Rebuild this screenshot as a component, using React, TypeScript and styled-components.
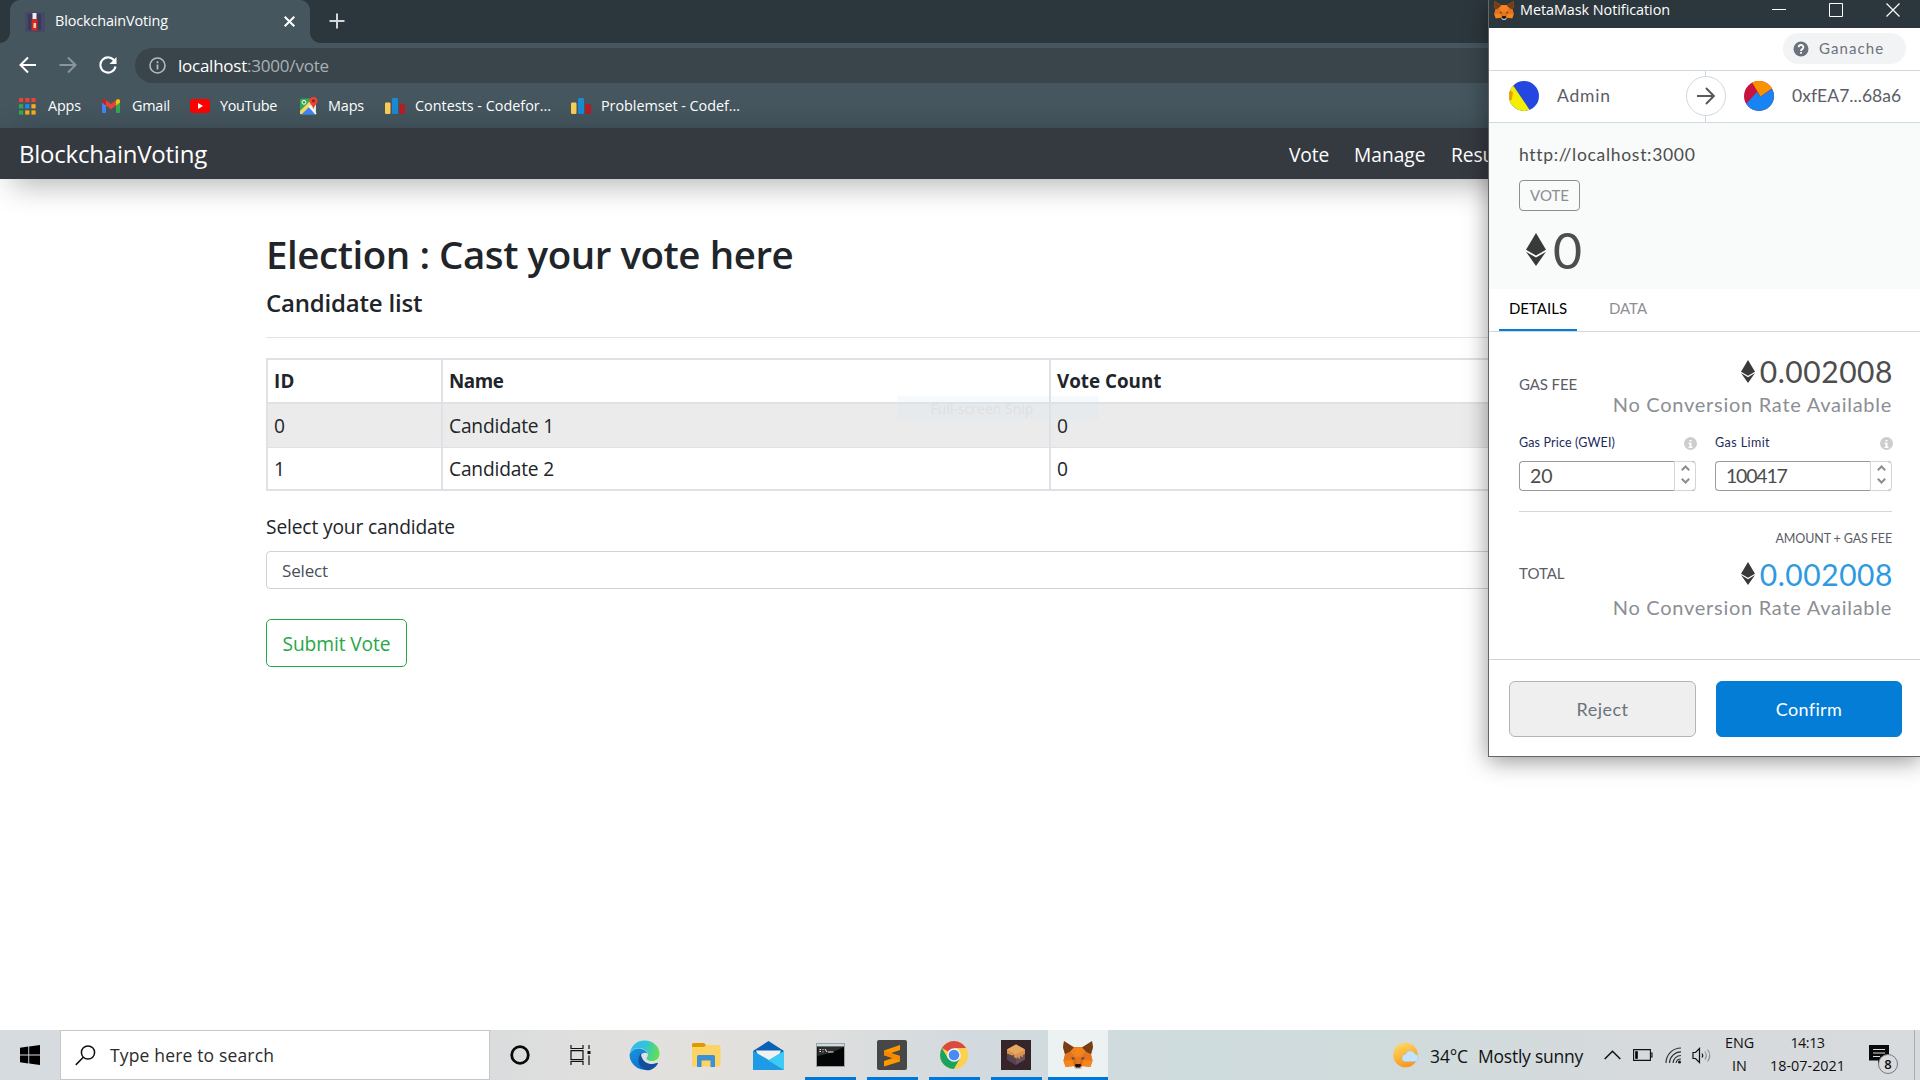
import React from "react";
import styled, { createGlobalStyle, css } from "styled-components";

const GlobalStyle = createGlobalStyle`
  *, *::before, *::after { box-sizing: border-box; }
  html, body { margin: 0; padding: 0; }
  body { background: #fff; overflow: hidden; }
  svg { display: block; flex: none; }
`;

const segoe = css`font-family: "Open Sans", "Noto Sans", sans-serif;`;
const euclid = css`font-family: Lato, "Open Sans", sans-serif;`;

const Desktop = styled.div`
  position: relative;
  display: flex;
  flex-direction: column;
  width: 1920px;
  height: 1080px;
  overflow: hidden;
  ${segoe}
  line-height: 1;
  color: #212529;
`;

/* Text with its own tracking */
const Text = styled.span<{ $ls?: number }>`
  white-space: pre;
  letter-spacing: ${(p) => p.$ls ?? 0}px;
`;

/* ---------- Browser chrome ---------- */
const TabStrip = styled.div`
  display: flex;
  height: 43px;
  flex: none;
  padding-left: 10px;
  background: #2c373d;
`;
const Tab = styled.div`
  position: relative;
  display: flex;
  align-items: center;
  width: 300px;
  height: 43px;
  padding: 0 15px;
  border-radius: 10px 10px 0 0;
  background: #45565f;
  color: #fff;
  font-size: 14.4px;
  &::before, &::after {
    content: "";
    position: absolute;
    bottom: 0;
    width: 10px;
    height: 10px;
  }
  &::before { left: -10px; background: radial-gradient(circle at 0 0, transparent 9.5px, #45565f 10px); }
  &::after { right: -10px; background: radial-gradient(circle at 100% 0, transparent 9.5px, #45565f 10px); }
`;
const TabTitle = styled(Text)`
  margin-left: 10px;
  flex: 1;
`;
const NewTab = styled.div`
  display: flex;
  align-items: center;
  margin-left: 19px;
  padding-bottom: 1px;
`;
const Toolbar = styled.div`
  display: flex;
  align-items: center;
  flex: none;
  height: 45px;
  padding: 0 0 1px 19px;
  background: #45565f;
`;
const ToolButton = styled.div`
  width: 40px;
`;
const AddressBar = styled.div`
  display: flex;
  align-items: center;
  flex: 1;
  height: 35px;
  margin-left: -4px;
  padding-left: 14px;
  border-radius: 18px 0 0 18px;
  background: #39454b;
  font-size: 17px;
  color: #fff;
`;
const Host = styled(Text)` margin-left: 12px; `;
const Path = styled(Text)` color: #a9b1b5; `;
const BookmarkBar = styled.div`
  display: flex;
  align-items: center;
  flex: none;
  height: 40px;
  padding: 0 0 4px 19px;
  background: #45565f;
  color: #fff;
  font-size: 14.4px;
`;
const Bookmark = styled.div<{ $w: number; $gap: number }>`
  display: flex;
  align-items: center;
  gap: ${(p) => p.$gap}px;
  width: ${(p) => p.$w}px;
`;

/* ---------- Page ---------- */
const NavBar = styled.div`
  position: relative;
  display: flex;
  align-items: center;
  justify-content: space-between;
  flex: none;
  height: 51px;
  padding: 1px 0 0 19px;
  background: #353940;
  color: #fff;
  box-shadow: 12px 6px 30px rgba(0, 0, 0, 0.3);
`;
const Brand = styled(Text)` font-size: 24px; `;
const NavLinks = styled.div`
  display: flex;
  width: 631px;
  padding-top: 1px;
  font-size: 19.2px;
`;
const NavLink = styled(Text)<{ $w: number }>` width: ${(p) => p.$w}px; `;
const Main = styled.main`
  display: flex;
  flex-direction: column;
  align-items: flex-start;
  flex: 1;
  padding: 56px 0 0 266px;
  background: #fff;
`;
const Title = styled.h1`
  margin: 0;
  font-size: 38.5px;
  font-weight: 600;
  line-height: 39px;
  letter-spacing: -0.45px;
  white-space: pre;
`;
const Subtitle = styled.h5`
  margin: 16px 0 0;
  font-size: 24px;
  font-weight: 600;
  line-height: 26px;
  letter-spacing: -0.2px;
`;
const Rule = styled.hr`
  width: 1388px;
  height: 1px;
  margin: 21px 0 20px;
  border: 0;
  background: #e3e4e5;
`;
const Table = styled.div`
  width: 1388px;
  border: 2px solid #dee2e6;
  font-size: 19.2px;
`;
const Row = styled.div<{ $h: number; $head?: boolean; $odd?: boolean; $line?: number }>`
  display: grid;
  grid-template-columns: 175px 608px 1fr;
  height: ${(p) => p.$h}px;
  border-bottom: ${(p) => p.$line ?? 0}px solid #dee2e6;
  background: ${(p) => (p.$odd ? "#ebebeb" : "#fff")};
  font-weight: ${(p) => (p.$head ? 700 : 400)};
  ${(p) => p.$head && "font-size: 18.8px;"}
`;
const Cell = styled.div`
  display: flex;
  align-items: center;
  padding: 0 0 0 6px;
  &:not(:last-child) { border-right: 2px solid #dee2e6; }
`;
const Label = styled.label`
  margin-top: 26px;
  font-size: 19.2px;
  line-height: 20px;
  letter-spacing: -0.14px;
`;
const SelectBox = styled.div`
  display: flex;
  align-items: center;
  width: 1388px;
  height: 38px;
  margin-top: 14px;
  padding: 0 0 0 15px;
  border: 1px solid #ced4da;
  border-radius: 4px;
  color: #495057;
  font-size: 17px;
`;
const SubmitButton = styled.div`
  display: flex;
  align-items: center;
  justify-content: center;
  width: 141px;
  height: 48px;
  margin-top: 30px;
  padding-top: 1px;
  border: 1px solid #28a745;
  border-radius: 5px;
  color: #28a745;
  font-size: 19.2px;
`;
const SnipHint = styled.div`
  position: absolute;
  left: 897px;
  top: 396px;
  display: flex;
  align-items: center;
  justify-content: center;
  width: 202px;
  height: 24px;
  padding: 2px 32px 0 0;
  background: rgba(215, 232, 240, 0.22);
  color: rgba(222, 214, 214, 0.6);
  font-size: 14px;
`;

/* ---------- Wallet popup ---------- */
const Popup = styled.div`
  position: absolute;
  left: 1488px;
  top: 0;
  display: flex;
  flex-direction: column;
  width: 433px;
  height: 757px;
  border-left: 1px solid #63676a;
  border-bottom: 1px solid #63676a;
  background: #fff;
  box-shadow: 0 4px 22px rgba(0, 0, 0, 0.42);
  ${euclid}
  color: #4d4d4d;
`;
const TitleBar = styled.div`
  display: flex;
  align-items: center;
  height: 28px;
  padding: 0 21px 8px 5px;
  background: #2c373d;
  color: #fff;
  ${segoe}
  font-size: 14.4px;
`;
const WindowTitle = styled(Text)` margin-left: 6px; flex: 1; `;
const WindowButtons = styled.div` display: flex; align-items: center; gap: 43px; `;
const NetworkRow = styled.div`
  display: flex;
  align-items: center;
  justify-content: flex-end;
  height: 43px;
  padding: 0 15px 1px 0;
  border-bottom: 1px solid #d2d8dd;
`;
const NetworkPill = styled.div`
  display: flex;
  align-items: center;
  width: 123px;
  height: 31px;
  padding-left: 10px;
  gap: 10px;
  border-radius: 16px;
  background: #f2f3f4;
  color: #6a737d;
  font-size: 15px;
`;
const Accounts = styled.div`
  display: flex;
  align-items: center;
  height: 52px;
  padding: 0 19px 1px 20px;
  border-bottom: 1px solid #d2d8dd;
  font-size: 17.5px;
  color: #5b5d67;
`;
const AccountName = styled(Text)<{ $w?: number }>`
  margin-left: 18px;
  width: ${(p) => (p.$w ? p.$w + "px" : "auto")};
`;
const ArrowColumn = styled.div`
  display: flex;
  align-items: center;
  justify-content: center;
  width: 40px;
  height: 51px;
  margin-right: 18px;
  background: linear-gradient(#d2d8dd, #d2d8dd) 19px 0 / 1px 100% no-repeat;
`;
const ArrowCircle = styled.div`
  display: flex;
  align-items: center;
  justify-content: center;
  width: 40px;
  height: 40px;
  border: 1px solid #d2d8dd;
  border-radius: 50%;
  background: #fff;
`;
const Summary = styled.div`
  display: flex;
  flex-direction: column;
  align-items: flex-start;
  height: 166px;
  padding: 23px 0 0 30px;
  background: #f9fafa;
  font-size: 17.5px;
`;
const ActionTag = styled.div`
  display: flex;
  align-items: center;
  justify-content: center;
  width: 61px;
  height: 31px;
  margin-top: 16px;
  border: 1px solid #8c8e94;
  border-radius: 4px;
  color: #8c8e94;
  font-size: 15px;
`;
const Value = styled.div`
  display: flex;
  align-items: center;
  height: 52px;
  margin: 13px 0 0 7px;
  gap: 7px;
  font-size: 50px;
`;
const Tabs = styled.div`
  display: flex;
  height: 43px;
  padding-left: 10px;
  border-bottom: 1px solid #d2d8dd;
  font-size: 15px;
`;
const PopupTab = styled.div<{ $active?: boolean; $w: number }>`
  display: flex;
  align-items: center;
  justify-content: center;
  width: ${(p) => p.$w}px;
  height: 42px;
  margin-right: 21px;
  padding-bottom: 1px;
  border-bottom: 2px solid ${(p) => (p.$active ? "#037dd6" : "transparent")};
  color: ${(p) => (p.$active ? "#000" : "#8c8e94")};
`;
const Fees = styled.div`
  display: flex;
  flex-direction: column;
  height: 327px;
  padding: 24px 28px 0 30px;
`;
const FeeRow = styled.div`
  display: flex;
  align-items: center;
  justify-content: space-between;
  height: 58px;
  flex: none;
  font-size: 15px;
  color: #5b5d67;
`;
const FeeLabel = styled(Text)<{ $lift?: number }>` padding-bottom: ${(p) => p.$lift ?? 0}px; `;
const FeeValues = styled.div`
  display: flex;
  flex-direction: column;
  align-items: flex-end;
  gap: 8px;
`;
const Amount = styled.div<{ $blue?: boolean }>`
  display: flex;
  align-items: center;
  gap: 5px;
  font-size: 30px;
  color: ${(p) => (p.$blue ? "#2f9ae0" : "#4d4d4d")};
`;
const Conversion = styled(Text)` font-size: 20px; color: #8c8e94; margin-right: 1px; `;
const GasInputs = styled.div` display: flex; gap: 18px; margin-top: 22px; `;
const GasField = styled.div` width: 178px; `;
const GasLabel = styled.div`
  display: flex;
  align-items: center;
  justify-content: space-between;
  height: 15px;
  font-size: 12.5px;
  color: #1b2b5c;
`;
const InfoDot = styled.div`
  display: flex;
  align-items: center;
  justify-content: center;
  width: 13px;
  height: 13px;
  border-radius: 50%;
  background: #cdcdcd;
`;
const NumberInput = styled.div`
  display: flex;
  justify-content: space-between;
  align-items: center;
  width: 177px;
  height: 30px;
  margin-top: 10px;
  padding-left: 10px;
  border: 1px solid #9b9b9b;
  border-right-color: #d5d5d5;
  border-radius: 4px;
  font-size: 19.5px;
  color: #4d4d4d;
`;
const Spinner = styled.div`
  display: flex;
  flex-direction: column;
  align-items: center;
  justify-content: space-between;
  width: 21px;
  height: 30px;
  padding: 3px 0 6px;
  border: 1px solid #d5d5d5;
  border-right: 0;
  border-radius: 0 4px 4px 0;
`;
const FeeDivider = styled.div` height: 1px; margin-top: 20px; flex: none; background: #d2d8dd; width: 373px; `;
const TotalCaption = styled.div`
  display: flex;
  justify-content: flex-end;
  margin: 21px 1px 13px 0;
  font-size: 12.5px;
  color: #5b5d67;
`;
const Footer = styled.div`
  display: flex;
  gap: 20px;
  flex: 1;
  padding: 21px 0 0 20px;
  border-top: 1px solid #d2d3d6;
`;
const FooterButton = styled.div<{ $primary?: boolean }>`
  display: flex;
  align-items: center;
  justify-content: center;
  width: ${(p) => (p.$primary ? 186 : 187)}px;
  height: 56px;
  padding-bottom: 1px;
  border: 1px solid ${(p) => (p.$primary ? "#037dd6" : "#b3b4b6")};
  border-radius: 6px;
  background: ${(p) => (p.$primary ? "#037dd6" : "#efefef")};
  color: ${(p) => (p.$primary ? "#fff" : "#6a737d")};
  font-size: 18px;
`;

/* ---------- Taskbar ---------- */
const Taskbar = styled.div`
  display: flex;
  flex: none;
  height: 50px;
  background: linear-gradient(90deg, #d6dbe0 0, #dadcdd 25%, #e3e1de 36%, #dfdfdd 42%, #d3dadf 50%, #cfdcdd 62%, #d0dbdc 72%, #d6dadd 85%, #d7dbde 100%);
  color: #111;
`;
const BarCell = styled.div<{ $w: number }>`
  display: flex;
  align-items: center;
  justify-content: center;
  flex: none;
  width: ${(p) => p.$w}px;
`;
const SearchBox = styled.div`
  display: flex;
  align-items: center;
  width: 430px;
  padding-left: 14px;
  border: 1px solid #c5c7c9;
  background: #fff;
  font-size: 17.5px;
  color: #2b2b2b;
`;
const SearchText = styled(Text)` margin-left: 14px; padding-top: 1px; `;
const Pinned = styled.div` display: flex; margin-left: 4px; gap: 2px; `;
const TaskApp = styled.div<{ $open?: boolean; $active?: boolean }>`
  display: flex;
  align-items: center;
  justify-content: center;
  width: 60px;
  background: ${(p) =>
    [
      p.$open ? `linear-gradient(#0078d7, #0078d7) center bottom / ${p.$active ? 60 : 51}px 3px no-repeat` : "",
      p.$active ? "linear-gradient(#ecf1f2, #ecf1f2)" : "",
    ].filter(Boolean).join(", ") || "none"};
`;
const Tray = styled.div`
  display: flex;
  align-items: center;
  width: 527px;
  margin-left: auto;
  font-size: 17.5px;
`;
const TrayItem = styled.div<{ $w: number; $drop?: number }>`
  flex: none;
  width: ${(p) => p.$w}px;
  padding-top: ${(p) => p.$drop ?? 0}px;
`;
const TrayStack = styled.div<{ $w: number }>`
  display: flex;
  flex-direction: column;
  align-items: center;
  gap: 9px;
  width: ${(p) => p.$w}px;
  padding-bottom: 1px;
  font-size: 14.4px;
`;
const Notifications = styled.div`
  position: relative;
  width: 58px;
  height: 50px;
  padding: 15px 0 0 13px;
`;
const Badge = styled.div`
  position: absolute;
  left: 22px;
  top: 24px;
  display: flex;
  align-items: center;
  justify-content: center;
  width: 20px;
  height: 20px;
  border: 1px solid #76797b;
  border-radius: 50%;
  background: #d8dbdd;
  font-size: 13px;
  font-weight: 600;
`;
const ShowDesktop = styled.div` width: 6px; height: 50px; border-left: 1px solid #a9adb0; `;

/* ---------- Icons ---------- */
const Fox = ({ size }: { size: number }) => (
  <svg width={size} height={size * 0.95} viewBox="0 0 30 28" preserveAspectRatio="none">
    <path d="M1 .5L10.500 6h9L29 .5l.8 6.500L28 13l1.500 6.500-2 6-8-1-1.500 2h-6l-1.500-2-8 1-2-6L2 13 .2 7z" fill="#e8761c" />
    <path d="M1 0l10 6.500-3.500 4L2 13 0 6zM29 0L19 6.500l3.500 4L28 13l2-7z" fill="#763d16" />
    <path d="M11 6.500h8l-1.500 9h-5z" fill="#f6851b" />
    <path d="M11 6.500l1.500 9L7 10.500zM19 6.500l-1.500 9 5.500-5z" fill="#f08324" />
    <path d="M2 13l5.500-2.500 4.500 6-7 2-4.500 1zM28 13l-5.500-2.500-4.500 6 7 2 4.500 1z" fill="#e4751f" />
    <path d="M.5 19.500l8.500-.5 2 5.500-8 1zM29.500 19.500l-8.500-.5-2 5.500 8 1z" fill="#f6851b" />
    <path d="M8.500 15.500l3.500 1.500-.5 1.500-2.500-.5zM21.500 15.500L18 17l.5 1.500 2.500-.5z" fill="#5c4a4a" />
    <path d="M12 17l1 6h4l1-6 1 7-1.500 1h-5L11 24z" fill="#cd6116" />
    <path d="M12 23.500l1-1h4l1 1v2h-6z" fill="#161616" />
    <path d="M11 25h8l-1.500 3h-5z" fill="#c8bbb0" />
    <path d="M12.200 23.500l1-1h3.600l1 1-.8 2.500h-4z" fill="#161616" />
  </svg>
);
const Eth = ({ w, h }: { w: number; h: number }) => (
  <svg width={w} height={h} viewBox="0 0 20 33" preserveAspectRatio="none">
    <path d="M10 0l10 16.700-10 5.800L0 16.700z" fill="#393939" />
    <path d="M10 24.600l10-5.900L10 33 0 18.700z" fill="#393939" />
  </svg>
);
const Bars = () => (
  <svg width="20" height="16" viewBox="0 0 20 16">
    <rect x="0" y="4.500" width="5.500" height="11.500" rx="1.200" fill="#f9cf56" />
    <rect x="7" y="0" width="6" height="16" rx="1.200" fill="#1c8ad1" />
    <rect x="14.500" y="6" width="5.500" height="10" rx="1.200" fill="#b81d24" />
  </svg>
);
const AppsIcon = () => {
  const colors = ["#ea4335", "#ea4335", "#ea4335", "#34a853", "#1a8cff", "#fbaf17", "#34a853", "#fbaf17", "#fbaf17"];
  return (
    <svg width="17" height="17" viewBox="0 0 17 17">
      {colors.map((c, i) => (
        <rect key={i} x={(i % 3) * 6.2} y={Math.floor(i / 3) * 6.2} width="4.200" height="4.200" fill={c} />
      ))}
    </svg>
  );
};
const Gmail = () => (
  <svg width="18" height="14" viewBox="0 0 18 14">
    <path d="M0 2v11q0 1 1 1h3V5z" fill="#4285f4" />
    <path d="M18 2v11q0 1-1 1h-3V5z" fill="#34a853" />
    <path d="M4 1.200l5 3.800 5-3.800V6.500L9 10.300 4 6.500z" fill="#ea4335" />
    <path d="M0 2Q0 0 2 0l2 1.200v5.300L0 3.500z" fill="#c5221f" />
    <path d="M18 2q0-2-2-2l-2 1.200v5.300l4-3z" fill="#fbbc04" />
  </svg>
);
const YouTube = () => (
  <svg width="20" height="14" viewBox="0 0 20 14">
    <rect width="20" height="14" rx="3.200" fill="#f00" />
    <path d="M8 4l5 3-5 3z" fill="#fff" />
  </svg>
);
const MapsIcon = () => (
  <svg width="18" height="18" viewBox="0 0 18 18">
    <rect y="1.500" width="16" height="16" rx="1.500" fill="#34a853" />
    <path d="M8 9l8 8.500H0z" fill="#4285f4" />
    <path d="M8.500 9.500L16 2.500V17z" fill="#e8eaed" />
    <path d="M0 14L12.500 1.500 15 4 2 17H0z" fill="#fdd663" />
    <path d="M9 9l7 8" stroke="#fff" strokeWidth="1.800" />
    <circle cx="4" cy="5.300" r="1.900" fill="none" stroke="#fff" strokeWidth="1" />
    <path d="M13.500 0a4 4 0 014 4c0 2.600-3 4.200-4 8-1-3.800-4-5.400-4-8a4 4 0 014-4z" fill="#ea4335" />
    <circle cx="13.500" cy="4" r="1.400" fill="#8a1c14" />
  </svg>
);
const Favicon = () => (
  <svg width="20" height="20" viewBox="0 0 20 20">
    <rect width="20" height="20" fill="#454866" />
    <rect x="3" y="2" width="13" height="16" fill="#39395a" />
    <rect x="7.500" y="1" width="4" height="6.500" fill="#eceef2" />
    <rect x="6.500" y="7" width="6" height="11.500" rx="1" fill="#d5291b" />
    <rect x="8.500" y="11" width="2.500" height="5" fill="#f6c6c0" />
  </svg>
);
const BackArrow = ({ color, flip }: { color: string; flip?: boolean }) => (
  <svg width="18" height="18" viewBox="0 0 18 18" fill="none" stroke={color} strokeWidth="2">
    <path d={flip ? "M0.500 9h15.500M9 1.500L16.500 9 9 16.500" : "M17 9H2M9 1.500L1.500 9 9 16.500"} />
  </svg>
);
const Caret = ({ up }: { up?: boolean }) => (
  <svg width="9" height="6" viewBox="0 0 9 6" fill="none" stroke="#8d8d8d" strokeWidth="2">
    <path d={up ? "M0.800 5.200L4.500 1.500l3.700 3.700" : "M0.800 0.800l3.700 3.700L8.200 0.800"} />
  </svg>
);
const InfoIcon = () => (
  <InfoDot>
    <svg width="5" height="8" viewBox="0 0 5 8" fill="#fff">
      <path d="M1.500 0h2v1.600h-2zM.5 2.700h3v4h1V8h-4V6.700h1V4h-1z" />
    </svg>
  </InfoDot>
);

const GasInput = ({ label, labelLs, value, valueLs }: { label: string; labelLs: number; value: string; valueLs: number }) => (
  <GasField>
    <GasLabel><Text $ls={labelLs}>{label}</Text><InfoIcon /></GasLabel>
    <NumberInput>
      <Text $ls={valueLs}>{value}</Text>
      <Spinner><Caret up /><Caret /></Spinner>
    </NumberInput>
  </GasField>
);

export default function App() {
  return (
    <Desktop>
      <GlobalStyle />
      <TabStrip>
        <Tab>
          <Favicon />
          <TabTitle $ls={-0.12}>BlockchainVoting</TabTitle>
          <svg width="11" height="11" viewBox="0 0 11 11" stroke="#fff" strokeWidth="2"><path d="M.7.7l9.600 9.600M10.300.7L.7 10.300" /></svg>
        </Tab>
        <NewTab>
          <svg width="16" height="16" viewBox="0 0 16 16" stroke="#d5d8da" strokeWidth="2"><path d="M8 .5v15M.5 8h15" /></svg>
        </NewTab>
      </TabStrip>
      <Toolbar>
        <ToolButton><BackArrow color="#fff" /></ToolButton>
        <ToolButton><BackArrow color="#8b969c" flip /></ToolButton>
        <ToolButton>
          <svg width="18" height="18" viewBox="0 0 18 18">
            <path d="M15.800 5.500A7.600 7.600 0 1016.500 10.500" fill="none" stroke="#fff" strokeWidth="2.100" />
            <path d="M17.500 1v7h-7z" fill="#fff" />
          </svg>
        </ToolButton>
        <AddressBar>
          <svg width="17" height="17" viewBox="0 0 17 17">
            <circle cx="8.500" cy="8.500" r="7.500" fill="none" stroke="#b4babd" strokeWidth="1.600" />
            <path d="M8.500 7.500v5M8.500 4.200v2" stroke="#b4babd" strokeWidth="1.800" />
          </svg>
          <Host $ls={-0.25}>localhost</Host><Path $ls={-0.19}>:3000/vote</Path>
        </AddressBar>
      </Toolbar>
      <BookmarkBar>
        <Bookmark $w={83} $gap={12}><AppsIcon /><Text $ls={-0.14}>Apps</Text></Bookmark>
        <Bookmark $w={88} $gap={12}><Gmail /><Text $ls={-0.21}>Gmail</Text></Bookmark>
        <Bookmark $w={110} $gap={10}><YouTube /><Text $ls={-0.31}>YouTube</Text></Bookmark>
        <Bookmark $w={85} $gap={10}><MapsIcon /><Text $ls={-0.15}>Maps</Text></Bookmark>
        <Bookmark $w={186} $gap={10}><Bars /><Text>Contests - Codefor...</Text></Bookmark>
        <Bookmark $w={180} $gap={10}><Bars /><Text $ls={-0.05}>Problemset - Codef...</Text></Bookmark>
      </BookmarkBar>
      <NavBar>
        <Brand $ls={-0.22}>BlockchainVoting</Brand>
        <NavLinks>
          <NavLink $w={65} $ls={-0.1}>Vote</NavLink>
          <NavLink $w={97}>Manage</NavLink>
          <NavLink $w={90} $ls={-0.1}>Results</NavLink>
        </NavLinks>
      </NavBar>
      <Main>
        <Title>Election : Cast your vote here</Title>
        <Subtitle>Candidate list</Subtitle>
        <Rule />
        <Table>
          <Row $h={44} $head $line={2}>
            <Cell><Text $ls={0.3}>ID</Text></Cell>
            <Cell><Text $ls={-0.4}>Name</Text></Cell>
            <Cell><Text $ls={0}>Vote Count</Text></Cell>
          </Row>
          <Row $h={44} $odd $line={1}>
            <Cell>0</Cell><Cell><Text $ls={-0.19}>Candidate 1</Text></Cell><Cell>0</Cell>
          </Row>
          <Row $h={41}>
            <Cell>1</Cell><Cell><Text $ls={-0.19}>Candidate 2</Text></Cell><Cell>0</Cell>
          </Row>
        </Table>
        <Label>Select your candidate</Label>
        <SelectBox><Text $ls={-0.15}>Select</Text></SelectBox>
        <SubmitButton><Text $ls={-0.1}>Submit Vote</Text></SubmitButton>
      </Main>

      <Taskbar>
        <BarCell $w={60}>
          <svg width="20" height="20" viewBox="0 0 20 20"><path d="M0 2.800l8.300-1.200v8H0zM9.200 1.500L20 0v9.600H9.200zM0 10.500h8.300v8L0 17.300zM9.200 10.500H20V20L9.200 18.500z" /></svg>
        </BarCell>
        <SearchBox>
          <svg width="21" height="21" viewBox="0 0 21 21" fill="none" stroke="#111" strokeWidth="1.500"><circle cx="13" cy="7.500" r="6.600" /><path d="M8.300 12.300L.8 19.900" /></svg>
          <SearchText $ls={0.16}>Type here to search</SearchText>
        </SearchBox>
        <BarCell $w={60}>
          <svg width="20" height="20" viewBox="0 0 20 20" fill="none" stroke="#0a0a0a" strokeWidth="2.800"><circle cx="10" cy="10" r="8.300" /></svg>
        </BarCell>
        <BarCell $w={60}>
          <svg width="21" height="20" viewBox="0 0 21 20" fill="none" stroke="#111" strokeWidth="1.200">
            <path d="M1 0v3.500h12V0M1 5.700h12v9H1zM1 20v-3.500h12V20M19 0v4M19 10.500V20" />
            <path d="M17.500 6h3v3h-3z" fill="#111" stroke="none" />
          </svg>
        </BarCell>
        <Pinned>
          <TaskApp>
            <svg width="31" height="31" viewBox="0 0 31 31">
              <defs>
                <linearGradient id="edgeTop" x1="0" y1="0.300" x2="1" y2="0.500"><stop offset="0" stopColor="#35b9f1" /><stop offset=".5" stopColor="#2fc5d8" /><stop offset="1" stopColor="#67e04b" /></linearGradient>
                <linearGradient id="edgeLeft" x1="0" y1="0" x2="0.600" y2="1"><stop offset="0" stopColor="#1796dd" /><stop offset="1" stopColor="#0c6fce" /></linearGradient>
              </defs>
              <path d="M.5 15C2 5 8 .5 15.500.5 24 .5 30.500 6.500 30.500 13.500c0 5-3.500 7.500-7.500 7.500-4 0-5.500-1.800-5.500-2.500 0-.9 1.400-1.400 1.400-4C18.900 11 14.500 8 9.500 8 5 8 2 11 .5 15z" fill="url(#edgeTop)" />
              <path d="M.5 15C2 11 5 8.500 9.500 8.500c4.500 0 8 2.500 9 5-1.500-1.500-6.500-1.200-7.500 4-1 6 4 12 12 10.500A15.300 15.300 0 01.5 15z" fill="url(#edgeLeft)" />
              <path d="M11.800 13.500C7 20 10 29.500 18 30.300c5 .2 9.500-3.500 11-7.300-.5-.9-3 1.500-7.500.9-6-.9-9-5-9.700-10.400z" fill="#124f9c" />
            </svg>
          </TaskApp>
          <TaskApp>
            <svg width="29" height="25" viewBox="0 0 29 25">
              <path d="M0 1.500Q0 0 1.500 0H12l2 2v3H0z" fill="#e09a00" />
              <path d="M0 4h12l2-2h13q1.500 0 1.500 1.500V22q0 1.500-1.500 1.500H1.500Q0 23.500 0 22z" fill="#fdd366" />
              <path d="M5 13.500q0-1.500 1.500-1.500h15q1.500 0 1.500 1.500V24h-4.500v-6.500h-9V24H5z" fill="#3a92d6" />
            </svg>
          </TaskApp>
          <TaskApp>
            <svg width="31" height="29" viewBox="0 0 31 29">
              <path d="M0 10L15.500 0 31 10v4H0z" fill="#0b5fb4" />
              <path d="M3 9.500h25l-4 10H7z" fill="#f0f1f2" />
              <path d="M0 10l16 9 15-9v19H0z" fill="#28b0ee" />
              <path d="M0 10l31 19H0z" fill="#1e9be4" />
              <path d="M31 10L15.500 19.500 31 29z" fill="#3dcbf5" />
            </svg>
          </TaskApp>
          <TaskApp $open>
            <svg width="29" height="24" viewBox="0 0 29 24">
              <rect x=".5" y=".5" width="28" height="23" fill="#050505" stroke="#98a4ac" />
              <path d="M1 1h27v2.500H1z" fill="#cfdbe2" />
              <path d="M1.500 13C8 12 18 9 28 4H1.500z" fill="#2d2d2d" />
              <path d="M3.500 6.500h1.500M3.500 8.500h1.500M7 6v1M7 8.500v.9M9 6l2 3M12 9h5.500" stroke="#eee" strokeWidth="1" />
            </svg>
          </TaskApp>
          <TaskApp $open>
            <svg width="30" height="30" viewBox="0 0 30 30">
              <rect width="30" height="30" rx="2" fill="#474747" />
              <path d="M7 10.500l16-5.500v5L13.500 13.200 23 16v5.500L7 26.500V21l9.500-3.200L7 15.300z" fill="#ff9800" />
              <path d="M7 15.300v-4.800L23 16v5z" fill="#f58a00" />
            </svg>
          </TaskApp>
          <TaskApp $open>
            <svg width="28" height="28" viewBox="0 0 28 28">
              <circle cx="14" cy="14" r="14" fill="#fdd04f" />
              <path d="M14 14L1.900 7A14 14 0 0126.100 7H14z" fill="#db4a3e" />
              <path d="M1.900 7A14 14 0 0014 28l6.100-10.500L14 14 8 17.500z" fill="#1ba261" />
              <path d="M14 7h12.100A14 14 0 0114 28l6-10.500z" fill="#fdd04f" />
              <circle cx="14" cy="14" r="6.800" fill="#f3f3f3" />
              <circle cx="14" cy="14" r="5.300" fill="#4a8af4" />
            </svg>
          </TaskApp>
          <TaskApp $open>
            <svg width="30" height="30" viewBox="0 0 30 30">
              <rect width="30" height="30" fill="#35252b" />
              <path d="M15 4.500l9 5v10L15 25l-9-5.500v-10z" fill="#66505a" />
              <path d="M15 14.500V25l-9-5.500v-10z" fill="#564450" />
              <path d="M15 4.500l9 5v4.500l-2 1v2l-1.500 0v-1.500l-1.500 1v2l-1.500.5v-2l-2.500 1.500-2-1.500v-2l-2 .5L6 13.500v-4z" fill="#d8924a" />
              <path d="M15 4.500l9 5-9 5-9-5z" fill="#e5a862" />
            </svg>
          </TaskApp>
          <TaskApp $open $active><Fox size={30} /></TaskApp>
        </Pinned>
        <Tray>
          <TrayItem $w={37}>
            <svg width="26" height="26" viewBox="0 0 26 26">
              <defs><linearGradient id="sun" x1="0.200" y1="0" x2="0.600" y2="1"><stop offset="0" stopColor="#ffdb63" /><stop offset="1" stopColor="#f7941d" /></linearGradient></defs>
              <circle cx="12.500" cy="13" r="12.300" fill="url(#sun)" />
              <path d="M12.500 19.500a3.500 3.500 0 01.2-7A4.800 4.800 0 0121.800 12a3.800 3.800 0 01.2 7.500z" fill="#c5e4fb" stroke="#a3cdf2" strokeWidth=".6" />
            </svg>
          </TrayItem>
          <TrayItem $w={48} $drop={3}><Text $ls={-0.13}>34°C</Text></TrayItem>
          <TrayItem $w={126} $drop={3}><Text $ls={-0.24}>Mostly sunny</Text></TrayItem>
          <TrayItem $w={29}><svg width="17" height="10" viewBox="0 0 17 10" fill="none" stroke="#111" strokeWidth="1.500"><path d="M.7 9L8.500 1.200 16.300 9" /></svg></TrayItem>
          <TrayItem $w={32}><svg width="20" height="12" viewBox="0 0 20 12"><path d="M.6.600h16.800v10.800H.6zM17.500 4H19v4h-1.500z" fill="none" stroke="#111" strokeWidth="1.100" /><path d="M2.200 2.200h2.600v7.600H2.200z" /></svg></TrayItem>
          <TrayItem $w={27}>
            <svg width="17" height="17" viewBox="0 0 17 17" fill="none" stroke="#333" strokeWidth="1.200"><path d="M1 16A15 15 0 0116 1M4.500 16A11.500 11.500 0 0116 4.800M8 16a8 8 0 018-7.500M11 16a5 5 0 015-4" /><circle cx="14.500" cy="15" r="1.500" fill="#111" stroke="none" /></svg>
          </TrayItem>
          <TrayItem $w={28}>
            <svg width="21" height="17" viewBox="0 0 21 17" fill="none" strokeWidth="1.200"><path d="M1 5.500h2.500L7.500 1.500v14l-4-4H1zM10 6.500q1.500 2 0 4" stroke="#111" /><path d="M12.800 4.500q3 4 0 8M15.500 2.500q4.500 6 0 12" stroke="#8f9396" /></svg>
          </TrayItem>
          <TrayStack $w={39}><Text $ls={-0.1}>ENG</Text><Text>IN</Text></TrayStack>
          <TrayStack $w={97}><Text $ls={-0.5}>14:13</Text><Text>18-07-2021</Text></TrayStack>
          <Notifications>
            <svg width="20" height="20" viewBox="0 0 20 20"><path d="M0 0h20v15.500h-7L9 19.500v-4H0z" fill="#0a0a0a" /><path d="M4 4.500h12M4 8h12M4 11.500h7" stroke="#dadddf" strokeWidth="1.200" /></svg>
            <Badge>8</Badge>
          </Notifications>
          <ShowDesktop />
        </Tray>
      </Taskbar>

      <SnipHint><Text>Full-screen Snip</Text></SnipHint>

      <Popup>
        <TitleBar>
          <Fox size={20} />
          <WindowTitle $ls={-0.05}>MetaMask Notification</WindowTitle>
          <WindowButtons>
            <svg width="14" height="14" viewBox="0 0 14 14"><path d="M0 6.500h14" stroke="#fff" strokeWidth="1" /></svg>
            <svg width="14" height="14" viewBox="0 0 14 14"><path d="M.5.500h13v13H.5z" fill="none" stroke="#fff" /></svg>
            <svg width="14" height="14" viewBox="0 0 14 14"><path d="M.5.500l13 13M13.500.500l-13 13" stroke="#fff" strokeWidth="1.200" /></svg>
          </WindowButtons>
        </TitleBar>
        <NetworkRow>
          <NetworkPill>
            <svg width="16" height="16" viewBox="0 0 16 16">
              <circle cx="8" cy="8" r="7.500" fill="#6a737d" />
              <path d="M5.600 6.300a2.400 2.200 0 114 1.500C8.600 8.600 8 8.700 8 9.900M8 11v1.800" fill="none" stroke="#fff" strokeWidth="1.800" />
            </svg>
            <Text $ls={1.1}>Ganache</Text>
          </NetworkPill>
        </NetworkRow>
        <Accounts>
          <svg width="30" height="30" viewBox="0 0 30 30">
            <clipPath id="av1"><circle cx="15" cy="15" r="15" /></clipPath>
            <g clipPath="url(#av1)"><rect width="30" height="30" fill="#2546e0" /><path d="M3.500 3.500L22 31H-2V4z" fill="#f4ee00" /><path d="M0 9l4 2-1 7-3 3z" fill="#f59a00" /></g>
          </svg>
          <AccountName $w={129} $ls={0.8}>Admin</AccountName>
          <ArrowColumn>
            <ArrowCircle>
              <svg width="18" height="18" viewBox="0 0 18 18" fill="none" stroke="#565a5e" strokeWidth="2"><path d="M0 9h16.500M9 1l7.800 8L9 17" /></svg>
            </ArrowCircle>
          </ArrowColumn>
          <svg width="30" height="30" viewBox="0 0 30 30">
            <clipPath id="av2"><circle cx="15" cy="15" r="15" /></clipPath>
            <g clipPath="url(#av2)"><rect width="30" height="30" fill="#c8143c" /><path d="M6-2L16.500 15.500 30 6V-2z" fill="#fa9200" /><path d="M2 23L13 11l3.500 4.500L28 8l4 6v18H0z" fill="#1883f2" /></g>
          </svg>
          <AccountName $ls={0.05}>0xfEA7...68a6</AccountName>
        </Accounts>
        <Summary>
          <Text $ls={0.69}>http://localhost:3000</Text>
          <ActionTag><Text>VOTE</Text></ActionTag>
          <Value><Eth w={20} h={33} /><Text>0</Text></Value>
        </Summary>
        <Tabs>
          <PopupTab $active $w={78}><Text>DETAILS</Text></PopupTab>
          <PopupTab $w={60}><Text>DATA</Text></PopupTab>
        </Tabs>
        <Fees>
          <FeeRow>
            <FeeLabel $ls={-0.12} $lift={1}>GAS FEE</FeeLabel>
            <FeeValues>
              <Amount><Eth w={14} h={23} /><Text $ls={0.55}>0.002008</Text></Amount>
              <Conversion $ls={0.73}>No Conversion Rate Available</Conversion>
            </FeeValues>
          </FeeRow>
          <GasInputs>
            <GasInput label="Gas Price (GWEI)" labelLs={0.15} value="20" valueLs={0} />
            <GasInput label="Gas Limit" labelLs={0.43} value="100417" valueLs={-1.2} />
          </GasInputs>
          <FeeDivider />
          <TotalCaption><Text $ls={-0.12}>AMOUNT + GAS FEE</Text></TotalCaption>
          <FeeRow>
            <FeeLabel $lift={28}>TOTAL</FeeLabel>
            <FeeValues>
              <Amount $blue><Eth w={14} h={23} /><Text $ls={0.55}>0.002008</Text></Amount>
              <Conversion $ls={0.73}>No Conversion Rate Available</Conversion>
            </FeeValues>
          </FeeRow>
        </Fees>
        <Footer>
          <FooterButton><Text $ls={0.49}>Reject</Text></FooterButton>
          <FooterButton $primary><Text $ls={0.34}>Confirm</Text></FooterButton>
        </Footer>
      </Popup>
    </Desktop>
  );
}
